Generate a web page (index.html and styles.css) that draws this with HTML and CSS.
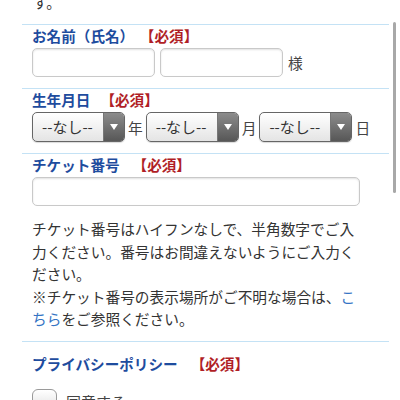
FILE: index.html
```html
<!DOCTYPE html>
<html lang="ja">
<head>
    <meta charset="UTF-8">
    <meta name="viewport" content="width=device-width, initial-scale=1.0">
    <title>お申し込みフォーム</title>
    <link rel="stylesheet" href="styles.css">
</head>
<body>

    <div class="page">
        <p class="lead">す。</p>

        <!-- 氏名 -->
        <div class="field">
            <div class="field-label">お名前（氏名）<span class="req req-wide">【必須】</span></div>
            <div class="row">
                <input type="text" class="text-input name-input">
                <input type="text" class="text-input name-input">
                <span class="unit unit-sama">様</span>
            </div>
        </div>

        <!-- 生年月日 -->
        <div class="field">
            <div class="field-label">生年月日<span class="req">【必須】</span></div>
            <div class="row">
                <div class="select"><span class="select-text">--なし--</span><span class="select-btn"></span></div>
                <span class="unit">年</span>
                <div class="select"><span class="select-text">--なし--</span><span class="select-btn"></span></div>
                <span class="unit">月</span>
                <div class="select"><span class="select-text">--なし--</span><span class="select-btn"></span></div>
                <span class="unit">日</span>
            </div>
        </div>

        <!-- チケット番号 -->
        <div class="field field-ticket">
            <div class="field-label">チケット番号<span class="req req-wide">【必須】</span></div>
            <input type="text" class="text-input ticket-input">
            <p class="note">チケット番号はハイフンなしで、半角数字でご入力ください。番号はお間違えないようにご入力ください。<br>※チケット番号の表示場所がご不明な場合は、<a href="#">こちら</a>をご参照ください。</p>
        </div>

        <!-- プライバシーポリシー -->
        <div class="field field-privacy">
            <div class="field-label">プライバシーポリシー<span class="req req-wide">【必須】</span></div>
            <label class="agree">
                <span class="checkbox"></span>
                <span class="agree-text">同意する</span>
            </label>
        </div>
    </div>

    <!-- scroll indicator -->
    <div class="scroll-indicator"></div>

</body>
</html>
```

FILE: styles.css
```css
* {
    box-sizing: border-box;
}

body {
    margin: 0;
    font-family: "Noto Sans CJK JP", "Noto Sans", sans-serif;
    color: #333;
    background: #fff;
    overflow: hidden;
}

.page {
    padding: 0 11px 0 22px;
}

.lead {
    margin: -10px 0 10px;
    padding-left: 11px;
    font-size: 14.7px;
    line-height: 24px;
}

/* Form fields */
.field {
    border-top: 1px solid #c4e2f5;
    padding: 0 10px 11px;
}

.field-label {
    font-size: 14.6px;
    font-weight: bold;
    line-height: 22px;
    color: #1e4c9e;
}

.field-label .req {
    margin-left: 10px;
    color: #b01e26;
}

.field-label .req-wide {
    margin-left: 13px;
}

.row {
    display: flex;
    align-items: center;
    margin-top: 1px;
}

.text-input {
    display: block;
    margin: 0;
    height: 29px;
    border: 1px solid #c9c9c9;
    border-radius: 5px;
    background: #fff;
    box-shadow: inset 0 1px 2px rgba(0, 0, 0, 0.12);
    font-size: 15px;
    outline: none;
}

.name-input {
    width: 123px;
    margin-right: 5px;
}

.unit {
    font-size: 14.7px;
    color: #444;
    margin: 0 3px;
}

.unit-sama {
    margin-left: 0;
}

/* Select boxes */
.select {
    display: flex;
    width: 93px;
    height: 30px;
    border: 1px solid #666;
    border-radius: 5px;
    overflow: hidden;
    background: linear-gradient(#ffffff, #e4e4e4);
    box-shadow: 0 1px 1px rgba(0, 0, 0, 0.15);
}

.select-text {
    flex: 1;
    padding-left: 9px;
    font-size: 15px;
    line-height: 28px;
    color: #333;
    white-space: nowrap;
    overflow: hidden;
}

.select-btn {
    position: relative;
    width: 21px;
    background: linear-gradient(#8c8c8c, #575757);
    border-left: 1px solid #777;
}

.select-btn::after {
    content: "";
    position: absolute;
    left: 6px;
    top: 11px;
    border-left: 4px solid transparent;
    border-right: 4px solid transparent;
    border-top: 6px solid #fff;
}

/* Ticket number */
.ticket-input {
    width: 328px;
    margin-top: 1px;
}

.note {
    width: 330px;
    margin: 12px 0 0;
    font-size: 14.7px;
    line-height: 22.5px;
    color: #333;
}

.note a {
    color: #3574c4;
    text-decoration: none;
}

.field-ticket {
    padding-bottom: 10px;
}

/* Privacy policy */
.field-privacy {
    padding-top: 11px;
}

.agree {
    display: flex;
    align-items: center;
    margin-top: 14px;
}

.checkbox {
    width: 25px;
    height: 25px;
    border: 1px solid #9a9a9a;
    border-radius: 6px;
    background: linear-gradient(#ffffff, #dcdcdc);
}

.agree-text {
    margin-left: 9px;
    font-size: 15px;
    color: #444;
}

.scroll-indicator {
    position: fixed;
    left: 393px;
    top: 22px;
    width: 3px;
    height: 171px;
    border-radius: 2px;
    background: #a8a8a8;
}
```
